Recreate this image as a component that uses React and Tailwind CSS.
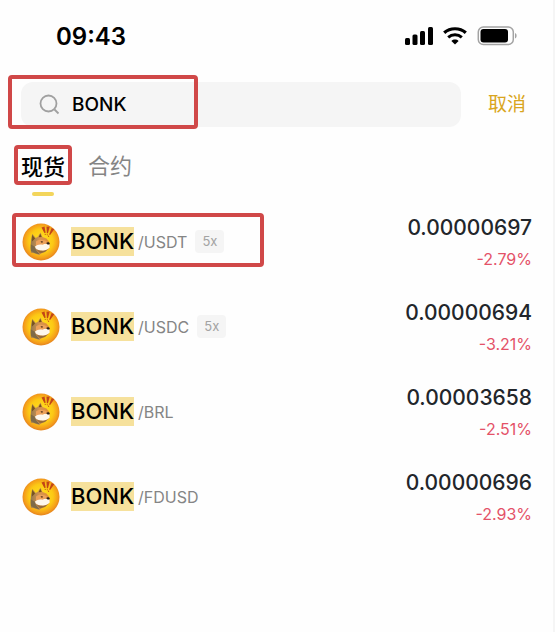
import { useState } from "react";

const pairs = [
  { quote: "USDT", leverage: "5x", price: "0.00000697", change: "-2.79%" },
  { quote: "USDC", leverage: "5x", price: "0.00000694", change: "-3.21%" },
  { quote: "BRL", price: "0.00003658", change: "-2.51%" },
  { quote: "FDUSD", price: "0.00000696", change: "-2.93%" },
];

const StatusBar = () => (
  <div className="flex h-[72px] items-center justify-between pl-14 pr-9">
    <span className="pt-0.5 text-2xl font-semibold text-black">09:43</span>
    <div className="flex items-center gap-2.5">
      <svg width="29" height="18" viewBox="0 0 29 18" fill="#000">
        <rect x="1" y="11" width="5" height="7" rx="1.5" />
        <rect x="8.5" y="7.5" width="5" height="10.5" rx="1.5" />
        <rect x="16" y="4" width="5" height="14" rx="1.5" />
        <rect x="24" y="0" width="5" height="18" rx="1.5" />
      </svg>
      <svg width="24" height="18" viewBox="0 0 24 18" fill="none" stroke="#000">
        <path d="M1.2 5.8C7.2.4 16.8.4 22.8 5.8" strokeWidth="3.2" />
        <path d="M5.2 10.3c3.8-3.3 9.8-3.3 13.6 0" strokeWidth="3" />
        <path d="M8.4 14c2-1.9 5.2-1.9 7.2 0L12 17.6z" fill="#000" stroke="none" />
      </svg>
      <svg width="40" height="20" viewBox="0 0 40 20" fill="none">
        <rect x="1.3" y="1" width="35" height="17.5" rx="5" stroke="#a3a3a3" strokeWidth="1.5" />
        <rect x="3.5" y="3" width="27.5" height="13.5" rx="3" fill="#000" />
        <path d="M38 7v5.5c1-.5 1.6-1.5 1.6-2.8S39 7.5 38 7z" fill="#a3a3a3" />
      </svg>
    </div>
  </div>
);

const BonkCoin = () => (
  <svg width="38" height="38" viewBox="0 0 38 38" className="shrink-0">
    <defs>
      <radialGradient id="coin" cx="50%" cy="48%" r="50%">
        <stop offset="0" stopColor="#ffe51f" />
        <stop offset="0.65" stopColor="#fcc915" />
        <stop offset="0.9" stopColor="#f59f1a" />
        <stop offset="1" stopColor="#e98a1e" />
      </radialGradient>
      <linearGradient id="fur" x1="0" y1="0" x2="1" y2="0">
        <stop offset="0" stopColor="#94794c" />
        <stop offset="0.45" stopColor="#d39452" />
        <stop offset="1" stopColor="#e38d35" />
      </linearGradient>
    </defs>
    <circle cx="19" cy="19" r="18.5" fill="url(#coin)" />
    <path d="M8.5 25 9 17l1.200-6 3.600 4 2.200-1.500L18.500 9.500l2 4.500 4 1.500 2.500 3 .8 3.500-1.300 4-4.500 3-5.500 3-3-1.500-4.500-1z" fill="url(#fur)" />
    <path d="m10.2 12 2.800 3.500-3 3zM18.200 10.500l1.500 3.500-3 .3z" fill="#75531f" />
    <path d="M8.8 21.500l3.700 2 1.500 3.500 4 4.500-5-1.200-4-2.500z" fill="#7d6a49" />
    <path d="M14 18.500c3-2.500 8-2 11.500.5l-4.500 3-7 1z" fill="#eda25b" />
    <path d="M13 23.500c2-2 5-2.500 7.500-1.800 2-1.200 4.500-1.200 7-.2l.2 3c-2 2.500-5.500 3.500-9 3-3.200-.3-5.200-1.500-5.700-4z" fill="#fdf7ec" />
    <path d="M14.5 26.500c3.500 2 9 1.800 12-.7l-3.500 3.200-5 1.500z" fill="#936a3c" />
    <path d="M24.300 20c.8-1.200 3-1 3.400.2s-1.200 1.600-2.300 1.300z" fill="#29201b" />
    <path d="m18.500 18.300 2.500.3-1 1.300z" fill="#38230f" />
    <path d="m19.500 4.500 3-1 1.200 6.200-1.300.4zM24.500 3.800l3.200-.3-1.700 6.800-1.200-.1zM29.700 5l2.500 1.200-4.100 5.800-1-.6z" fill="#c24516" />
    <path d="m22.800 10.800 1 .3-.2 1-.9-.3zM24.900 11.200l1 .2-.3 1-.9-.3zM26.300 12.500l1 .4-.6 1-.8-.5z" fill="#c24516" />
  </svg>
);

const PairRow = ({ pair, marked }) => (
  <li className="relative flex h-[85px] items-center justify-between pl-[22px] pr-[21px]">
    {marked && (
      <span className="pointer-events-none absolute left-3 top-3.5 h-[54px] w-[252px] rounded-sm border-4 border-[#d04848]" />
    )}
    <div className="flex items-center">
      <BonkCoin />
      <mark className="ml-[11px] bg-[#f6e19c] text-[22px] font-medium leading-[29px] text-black">
        BONK
      </mark>
      <span className="ml-1 text-base text-[#858585]">/{pair.quote}</span>
      {pair.leverage && (
        <span className="ml-2 rounded bg-[#f5f5f5] px-[7px] text-[13px] leading-[23px] text-[#a3a3a3]">
          {pair.leverage}
        </span>
      )}
    </div>
    <div className="pt-0.5 text-right">
      <p className="text-[21px] font-medium leading-8 text-[#22262b]">{pair.price}</p>
      <p className="text-base leading-[30px] text-[#e45268]">{pair.change}</p>
    </div>
  </li>
);

const App = () => {
  const [query, setQuery] = useState("BONK");
  const [tab, setTab] = useState("spot");

  return (
    <div className="min-h-screen border-r-2 border-[#f5f5f5] bg-[#fefefe] font-['Inter','Noto_Sans_CJK_SC',sans-serif]">
      <StatusBar />

      <div className="relative mt-2.5 flex items-center pl-[21px] pr-[27px]">
        <label className="flex h-[45px] min-w-0 flex-1 items-center rounded-xl bg-[#f5f5f5] pl-[18px]">
          <svg width="22" height="22" viewBox="0 0 22 22" fill="none" stroke="#a0a0a0" strokeWidth="1.8">
            <circle cx="9.5" cy="9.5" r="8" />
            <path d="m15.5 15.5 4 4" />
          </svg>
          <input
            type="text"
            aria-label="搜索"
            value={query}
            onChange={(e) => setQuery(e.target.value)}
            className="ml-[11px] min-w-0 flex-1 bg-transparent pt-0.5 text-[19px] font-medium text-black outline-none"
          />
        </label>
        <button className="ml-[27px] pt-0.5 text-[19px] text-[#d9a520]" onClick={() => setQuery("")}>
          取消
        </button>
        <span className="pointer-events-none absolute -top-[7px] left-2 h-[54px] w-[190px] rounded-sm border-4 border-[#d04848]" />
      </div>

      <div className="mt-[18px] flex h-[54px] items-start pl-3.5">
        <div className="flex flex-col items-center gap-[7px]">
          <button
            className="h-10 rounded-sm border-4 border-[#d04848] px-[3px] pt-0.5 text-[22px] font-medium leading-8 text-black"
            onClick={() => setTab("spot")}
          >
            现货
          </button>
          {tab === "spot" && <span className="h-1 w-[22px] rounded-xs bg-[#f3d55b]" />}
        </div>
        <div className="ml-4 flex flex-col items-center gap-[7px]">
          <button className="h-10 pt-0.5 text-[22px] text-[#858585]" onClick={() => setTab("futures")}>
            合约
          </button>
          {tab === "futures" && <span className="h-1 w-[22px] rounded-xs bg-[#f3d55b]" />}
        </div>
      </div>

      <ul>
        {pairs.map((pair, i) => (
          <PairRow key={pair.quote} pair={pair} marked={i === 0} />
        ))}
      </ul>
    </div>
  );
};

export default App;
